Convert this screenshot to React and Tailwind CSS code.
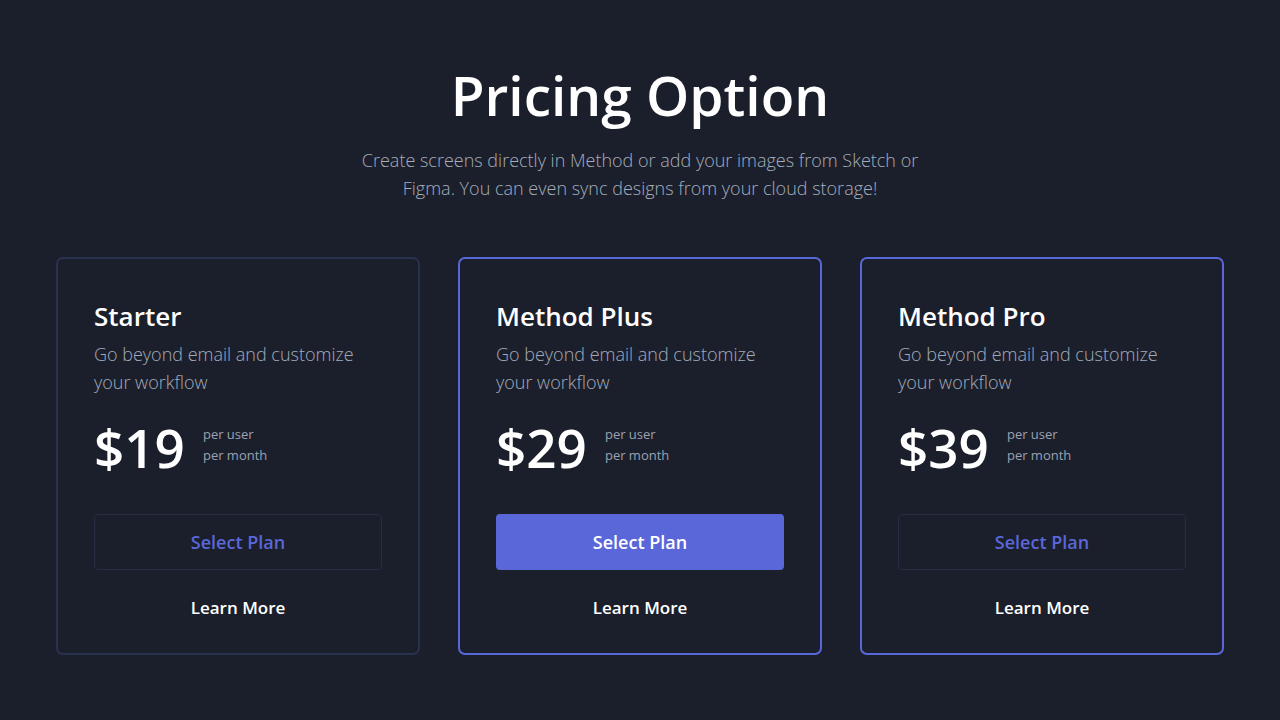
import React from 'react';

const plans = [
  { name: 'Starter', price: '$19', featured: false, border: 'border-[#283150]' },
  { name: 'Method Plus', price: '$29', featured: true, border: 'border-[#5a67d8]' },
  { name: 'Method Pro', price: '$39', featured: false, border: 'border-[#5a67d8]' },
];

const PlanCard = ({ plan }) => (
  <div className={`w-[364px] h-[398px] border-2 ${plan.border} rounded-[7px] px-[36px] pt-[41px] flex flex-col`}>
    <h2 className="text-[26px] leading-[32px] font-semibold text-white">{plan.name}</h2>
    <p className="mt-[8px] text-[18px] leading-[28px] font-light text-[#a3abbb]">
      Go beyond email and customize your workflow
    </p>
    <div className="mt-[22px] flex items-center">
      <span className="text-[53px] leading-[60px] font-semibold text-white">{plan.price}</span>
      <div className="ml-[18px] text-[13px] leading-[21px] text-[#9aa2b2] -mt-[6px]">
        <div>per user</div>
        <div>per month</div>
      </div>
    </div>
    {plan.featured ? (
      <button className="mt-[36px] h-[56px] w-full rounded-[4px] bg-[#5a67d8] text-white text-[18px] font-semibold">
        Select Plan
      </button>
    ) : (
      <button className="mt-[36px] h-[56px] w-full rounded-[4px] border border-[#262c42] text-[#5a67d8] text-[18px] font-semibold">
        Select Plan
      </button>
    )}
    <button className="mt-[26px] text-[17px] leading-[24px] font-semibold text-white">Learn More</button>
  </div>
);

const App = () => {
  return (
    <div
      className="min-h-screen bg-[#1b1f2b] flex flex-col items-center pt-[59px]"
      style={{ fontFamily: '"Open Sans", Lato, sans-serif' }}
    >
      <h1 className="text-[55px] leading-[72px] font-semibold text-white">Pricing Option</h1>
      <p className="mt-[15px] w-[580px] text-center text-[18px] leading-[28px] font-light text-[#a4adbd]">
        Create screens directly in Method or add your images from Sketch or Figma. You can even sync designs from your cloud storage!
      </p>
      <div className="mt-[55px] flex gap-[38px]">
        {plans.map((plan) => (
          <PlanCard key={plan.name} plan={plan} />
        ))}
      </div>
    </div>
  );
};

export default App;
